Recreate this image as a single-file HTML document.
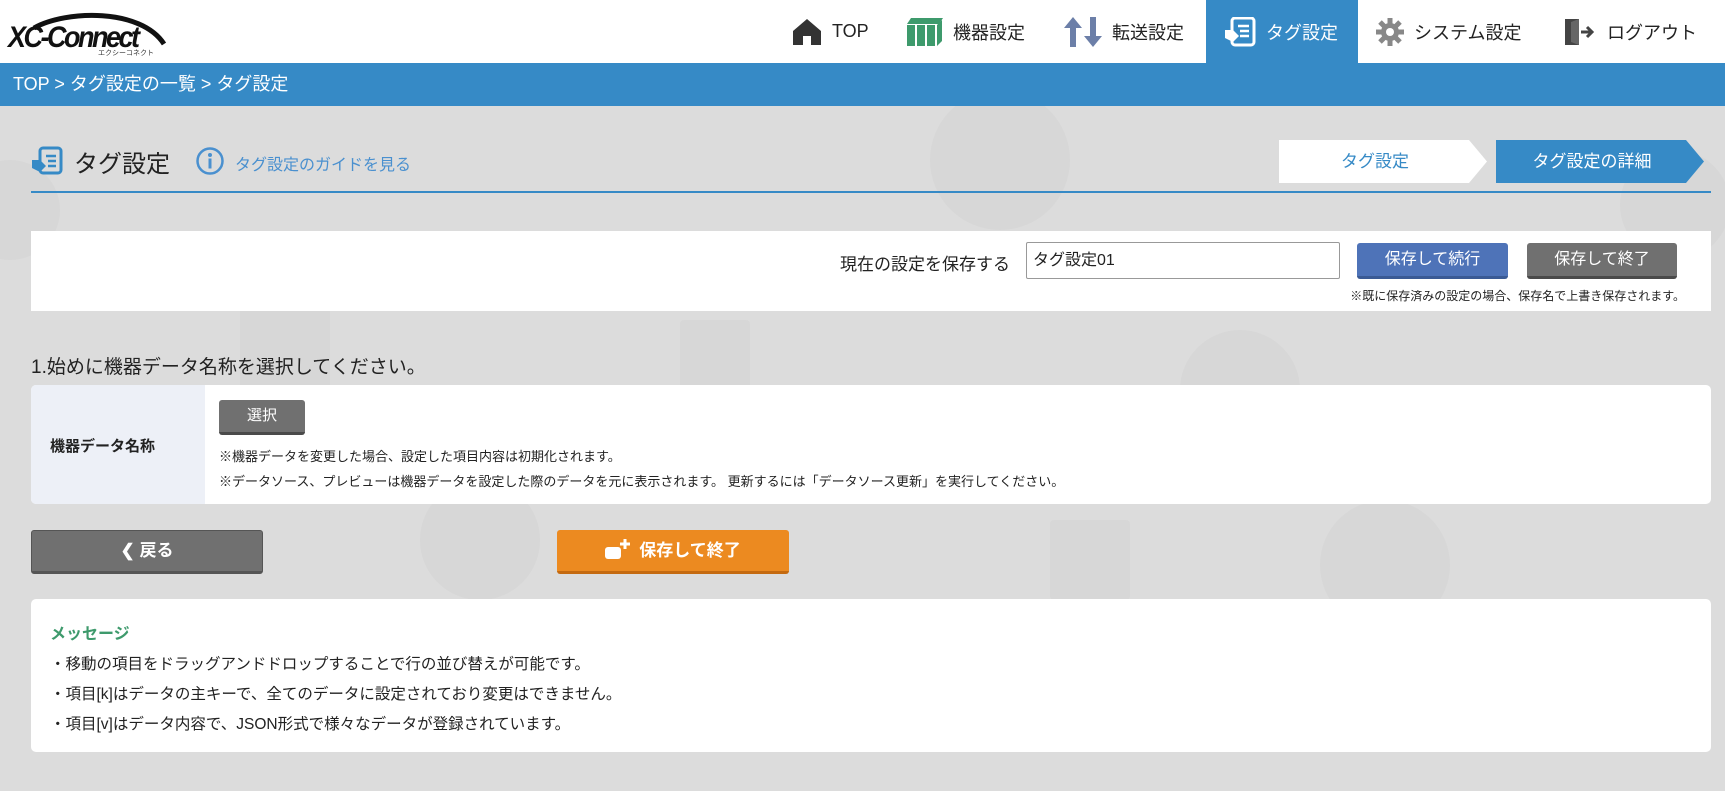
<!DOCTYPE html>
<html><head><meta charset="utf-8">
<style>
*{box-sizing:border-box;margin:0;padding:0}
body{width:1725px;height:791px;overflow:hidden;background:#dcdcdc;font-family:"Liberation Sans","Noto Sans CJK JP",sans-serif;color:#222;position:relative}
.abs{position:absolute}
.hdr{left:0;top:0;width:1725px;height:63px;background:#fff}
.nav{top:0;height:63px;display:flex;align-items:center;font-size:18px;color:#222}
.nav svg{margin-right:10px}
.bc{left:0;top:63px;width:1725px;height:43px;background:#368ac6;color:#fff;font-size:18px;line-height:43px;padding-left:13px}
.panel{background:#fff;border-radius:5px}
.btn{color:#fff;font-size:16px;text-align:center;border-radius:3px}
.shape{position:absolute;background:#d7d7d7;border-radius:50%}
</style></head><body>
<div class="shape" style="left:930px;top:90px;width:140px;height:140px"></div>
<div class="shape" style="left:1180px;top:330px;width:120px;height:120px"></div>
<div class="shape" style="left:420px;top:480px;width:120px;height:120px"></div>
<div class="shape" style="left:1320px;top:500px;width:130px;height:130px"></div>
<div class="shape" style="left:-40px;top:160px;width:100px;height:100px"></div>
<div class="shape" style="left:1620px;top:150px;width:110px;height:110px"></div>
<div class="shape" style="left:680px;top:320px;width:70px;height:70px;border-radius:4px"></div>
<div class="shape" style="left:240px;top:300px;width:90px;height:90px;border-radius:6px"></div>
<div class="shape" style="left:1050px;top:520px;width:80px;height:80px;border-radius:4px"></div>

<div class="abs hdr"></div>
<div class="abs" style="left:6px;top:8px;width:160px;height:50px">
<svg width="165" height="50" viewBox="0 0 165 50"><path d="M28 20 C60 2 135 0 158 36" stroke="#111" stroke-width="5" fill="none"/></svg>
<div class="abs" style="left:2px;top:14px;font:italic bold 27px 'Liberation Sans',sans-serif;letter-spacing:-2.5px;color:#111;transform:scaleY(1.1)">XC-Connect</div>
<div class="abs" style="left:92px;top:40px;font-size:7px;color:#333">エクシーコネクト</div>
</div>

<div class="abs" style="left:1206px;top:0;width:152px;height:63px;background:#368ac6"></div>
<div class="abs nav" style="left:792px"><svg width="30" height="28" viewBox="0 0 30 28"><path d="M15 1 L29 13 V27 H19 V18 H11 V27 H1 V13Z" fill="#333"/></svg>TOP</div>
<div class="abs nav" style="left:905px"><svg width="38" height="28" viewBox="0 0 38 28"><path d="M6 0 H38 L34 6 H2Z" fill="#3e9a6c"/><rect x="2" y="7" width="8" height="21" fill="#3e9a6c"/><rect x="12" y="7" width="8" height="21" fill="#3e9a6c"/><rect x="22" y="7" width="8" height="21" fill="#3e9a6c"/><path d="M32 7 L37 2 V23 L32 28Z" fill="#3e9a6c"/></svg>機器設定</div>
<div class="abs nav" style="left:1064px"><svg width="38" height="30" viewBox="0 0 38 30"><path d="M9 0 L18 11 H12 V30 H6 V11 H0Z" fill="#6c7fa8"/><path d="M29 30 L38 19 H32 V0 H26 V19 H20Z" fill="#6c7fa8"/></svg>転送設定</div>
<div class="abs nav" style="left:1224px;color:#fff"><svg width="32" height="30" viewBox="0 0 32 30"><rect x="8" y="1" width="22" height="27" rx="3" fill="none" stroke="#fff" stroke-width="3"/><path d="M14 9H25M16 14H25M16 19H25" stroke="#fff" stroke-width="2.5"/><path d="M1 13 H9 L15 19 L9 25 L1 21Z" fill="#fff"/></svg>タグ設定</div>
<div class="abs nav" style="left:1376px"><svg width="28" height="28" viewBox="0 0 28 28"><circle cx="14" cy="14" r="9" fill="#888"/><path d="M14 0V28M0 14H28M4 4L24 24M24 4L4 24" stroke="#888" stroke-width="5"/><circle cx="14" cy="14" r="4" fill="#fff"/></svg>システム設定</div>
<div class="abs nav" style="left:1563px"><svg width="34" height="30" viewBox="0 0 34 30"><path d="M2 2 H16 V28 H2Z" fill="#444"/><path d="M16 2 L8 5 V25 L16 28" fill="#666"/><path d="M18 15 H28 M24 10 L29 15 L24 20" stroke="#444" stroke-width="3" fill="none"/></svg>ログアウト</div>

<div class="abs bc">TOP &gt; タグ設定の一覧 &gt; タグ設定</div>

<div class="abs" style="left:31px;top:146px"><svg width="32" height="30" viewBox="0 0 32 30"><rect x="9" y="2" width="21" height="25" rx="3" fill="none" stroke="#368ac6" stroke-width="3"/><path d="M15 10H25M17 15H25M17 20H25" stroke="#368ac6" stroke-width="2.5"/><path d="M1 14 H9 L15 20 L9 26 L1 22Z" fill="#368ac6"/></svg></div>
<div class="abs" style="left:74px;top:144px;font-size:24px;color:#222">タグ設定</div>
<div class="abs" style="left:195px;top:146px"><svg width="30" height="30" viewBox="0 0 30 30"><circle cx="15" cy="15" r="12.5" fill="none" stroke="#4a90cf" stroke-width="2.5"/><circle cx="15" cy="9" r="2" fill="#4a90cf"/><rect x="13.5" y="12.5" width="3" height="10" fill="#4a90cf"/></svg></div>
<div class="abs" style="left:235px;top:151px;font-size:16px;color:#4a90cf">タグ設定のガイドを見る</div>
<svg class="abs" style="left:1279px;top:140px" width="430" height="43"><path d="M0 0 H190 L208 21.5 L190 43 H0Z" fill="#fff"/><path d="M217 0 H407 L425 21.5 L407 43 H217Z" fill="#368ac6"/></svg>
<div class="abs" style="left:1279px;top:140px;width:192px;line-height:43px;text-align:center;font-size:17px;color:#368ac6">タグ設定</div>
<div class="abs" style="left:1496px;top:140px;width:192px;line-height:43px;text-align:center;font-size:17px;color:#fff">タグ設定の詳細</div>
<div class="abs" style="left:31px;top:191px;width:1680px;height:2px;background:#368ac6"></div>

<div class="abs" style="left:31px;top:231px;width:1680px;height:80px;background:#fff"></div>
<div class="abs" style="left:840px;top:250px;font-size:17px">現在の設定を保存する</div>
<div class="abs" style="left:1026px;top:242px;width:314px;height:37px;border:1px solid #999;border-radius:2px;background:#fff;font-size:16px;line-height:35px;padding-left:6px">タグ設定01</div>
<div class="abs btn" style="left:1357px;top:243px;width:151px;height:36px;line-height:33px;background:#4e73b8;border-bottom:3px solid #3a5a94">保存して続行</div>
<div class="abs btn" style="left:1527px;top:243px;width:150px;height:36px;line-height:33px;background:#707070;border-bottom:3px solid #4a4a4a">保存して終了</div>
<div class="abs" style="right:40px;top:287px;font-size:12px;color:#222">※既に保存済みの設定の場合、保存名で上書き保存されます。</div>

<div class="abs" style="left:31px;top:352px;font-size:19px">1.始めに機器データ名称を選択してください。</div>
<div class="abs panel" style="left:31px;top:385px;width:1680px;height:119px;overflow:hidden"><div style="width:174px;height:119px;background:#edf0f7"></div></div>
<div class="abs" style="left:50px;top:435px;font-size:15px;font-weight:bold">機器データ名称</div>
<div class="abs btn" style="left:219px;top:400px;width:86px;height:35px;line-height:31px;background:#707070;border-bottom:3px solid #4a4a4a;font-size:15px">選択</div>
<div class="abs" style="left:219px;top:446px;font-size:13px">※機器データを変更した場合、設定した項目内容は初期化されます。</div>
<div class="abs" style="left:219px;top:471px;font-size:13px">※データソース、プレビューは機器データを設定した際のデータを元に表示されます。 更新するには「データソース更新」を実行してください。</div>

<div class="abs btn" style="left:31px;top:530px;width:232px;height:44px;line-height:40px;background:#707070;font-weight:bold;font-size:17px;border:1px solid #555;border-bottom-width:3px">❮ 戻る</div>
<div class="abs btn" style="left:557px;top:530px;width:232px;height:44px;line-height:41px;background:#ec8a20;border-bottom:3px solid #c46a10;font-weight:bold;font-size:17px"><svg width="26" height="20" viewBox="0 0 26 20" style="vertical-align:-3px;margin-right:8px"><rect x="0" y="8" width="16" height="12" rx="3" fill="#fff"/><path d="M20 0V10M15 5H25" stroke="#fff" stroke-width="3"/></svg>保存して終了</div>

<div class="abs panel" style="left:31px;top:599px;width:1680px;height:153px"></div>
<div class="abs" style="left:50px;top:620px;font-size:16px;font-weight:bold;color:#3e9a6c">メッセージ</div>
<div class="abs" style="left:50px;top:650px;font-size:15.5px;line-height:30px">・移動の項目をドラッグアンドドロップすることで行の並び替えが可能です。<br>・項目[k]はデータの主キーで、全てのデータに設定されており変更はできません。<br>・項目[v]はデータ内容で、JSON形式で様々なデータが登録されています。</div>
</body></html>
